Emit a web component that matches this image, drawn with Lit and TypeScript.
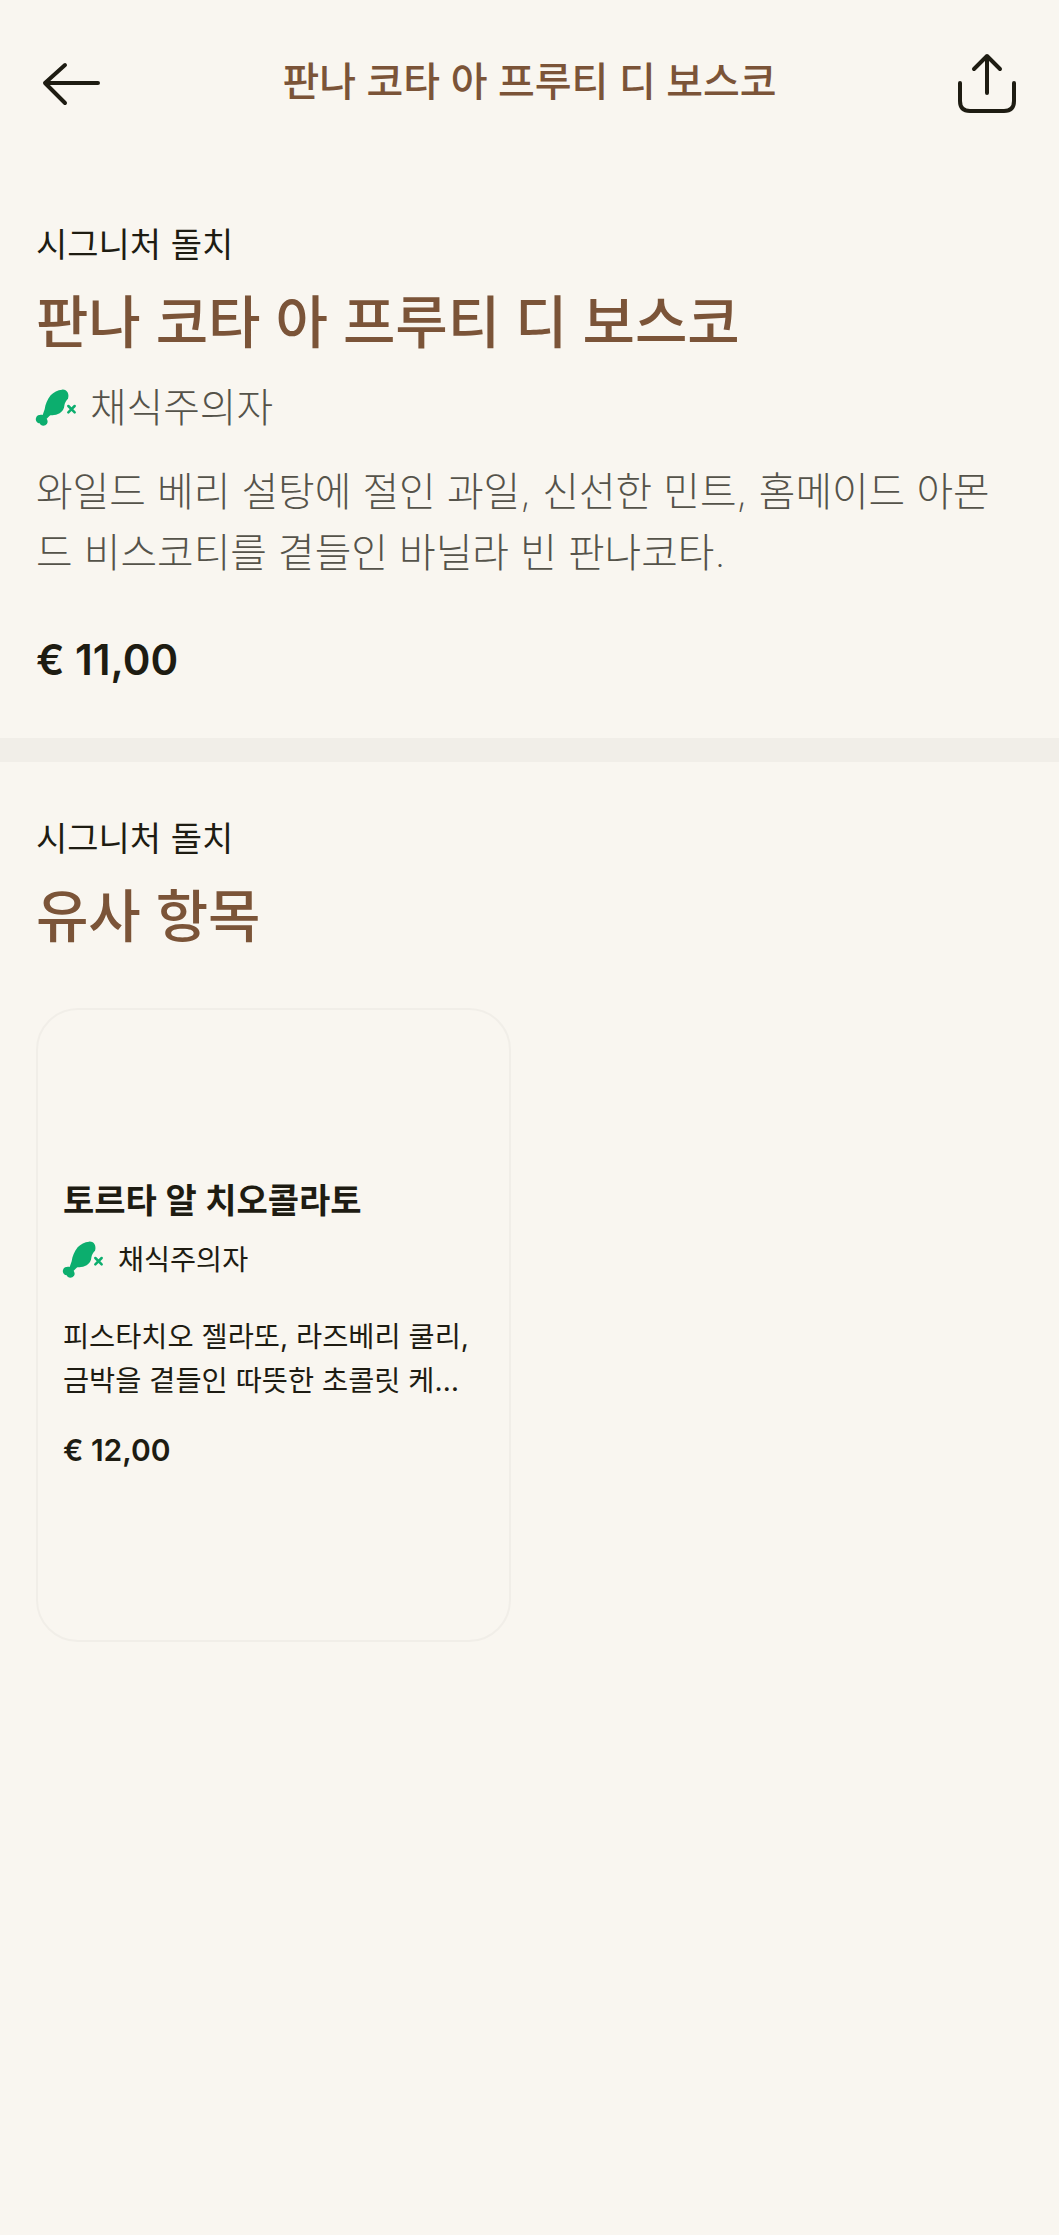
import { LitElement, html, css, svg } from "lit";
import { customElement } from "lit/decorators.js";

const drum = svg`<path fill="#0cae6e" d="M93 17 C107 15 116 29 111 44 C105 50 101 56 100 65 C99 80 86 91 69 93 C63 94 59 93 56 95 L47 104 C49 108 52 113 48 119 C43 127 29 127 26 118 C20 118 12 111 15 102 C18 92 29 92 35 93 L41 76 C43 61 49 46 59 34 C68 24 80 18 93 17 Z"/><path fill="none" stroke="#0cae6e" stroke-width="7.5" stroke-linecap="round" d="M112 66 L131 85 M131 66 L112 85"/>`;

@customElement("app-root")
export class AppRoot extends LitElement {
  static styles = css`
    :host { display: block; width: 1059px; min-height: 2235px; background: #f9f6f0; color: #1e1c12;
      font-family: "Inter", "Noto Sans CJK KR", sans-serif; }
    * { box-sizing: border-box; }
    .bar { display: flex; align-items: center; justify-content: space-between; height: 166px; padding: 0 0 0 40px; }
    .bar svg { display: block; fill: none; stroke: #1e1c12; stroke-width: 4; stroke-linecap: round; stroke-linejoin: round; }
    .back { width: 64px; height: 64px; }
    .share { width: 64px; height: 64px; margin-right: 40px; margin-top: -2px; }
    .bar-title { font-size: 40px; font-weight: 500; color: #7b5438; line-height: 48px; margin-top: -2px; letter-spacing: -0.05px; }
    .section { padding: 0 36px; }
    .top { padding-top: 54px; }
    .eyebrow { font-size: 34px; line-height: 50px; font-weight: 400; }
    .heading { font-size: 57px; font-weight: 500; color: #7b5438; line-height: 68px; margin-top: 19px; letter-spacing: -0.1px; }
    .veg { display: flex; align-items: center; }
    .veg svg { width: 42px; height: 38px; flex: none; overflow: visible; }
    .veg-lg { margin-top: 26px; gap: 12px; font-size: 39.8px; font-weight: 200; color: #55534a; line-height: 50px; }
    .desc { margin: 28px 0 0; font-size: 39.8px; font-weight: 200; line-height: 61px; color: #55534a; }
    .price { margin-top: 49px; font-size: 42px; font-weight: 600; line-height: 56px; }
    .rule { height: 24px; background: #f1eee8; margin-top: 50px; }
    .similar { padding-top: 52px; }
    .card { width: 475px; height: 634px; margin-top: 57px; border: 2px solid #f1eee8; border-radius: 42px; padding: 169px 25px 0; }
    .card-title { font-size: 34px; font-weight: 600; line-height: 44px; }
    .veg-sm { margin-top: 17px; gap: 13px; font-size: 28.3px; font-weight: 400; line-height: 40px; }
    .card-desc { margin: 35px 0 0; max-width: 414px; font-size: 28.4px; line-height: 44px; font-weight: 400;
      display: -webkit-box; -webkit-line-clamp: 2; -webkit-box-orient: vertical; overflow: hidden; }
    .card-price { margin-top: 27px; font-size: 30px; font-weight: 600; line-height: 40px; }
  `;

  render() {
    return html`
      <header class="bar">
        <svg class="back" viewBox="40 51 64 64"><path d="M45 83 H98 M65 65 L45 83 L65 103"/></svg>
        <div class="bar-title">판나 코타 아 프루티 디 보스코</div>
        <svg class="share" viewBox="955 50 64 64"><path d="M987 56 V93 M974 69 L987 56 L1000 69 M960 83 V101 Q960 111 970 111 H1004 Q1014 111 1014 101 V83"/></svg>
      </header>
      <section class="section top">
        <div class="eyebrow">시그니처 돌치</div>
        <div class="heading">판나 코타 아 프루티 디 보스코</div>
        <div class="veg veg-lg"><svg viewBox="15 15 126 114">${drum}</svg><span>채식주의자</span></div>
        <p class="desc">와일드 베리 설탕에 절인 과일, 신선한 민트, 홈메이드 아몬드 비스코티를 곁들인 바닐라 빈 판나코타.</p>
        <div class="price">€ 11,00</div>
      </section>
      <div class="rule"></div>
      <section class="section similar">
        <div class="eyebrow">시그니처 돌치</div>
        <div class="heading">유사 항목</div>
        <article class="card">
          <div class="card-title">토르타 알 치오콜라토</div>
          <div class="veg veg-sm"><svg viewBox="15 15 126 114">${drum}</svg><span>채식주의자</span></div>
          <p class="card-desc">피스타치오 젤라또, 라즈베리 쿨리, 금박을 곁들인 따뜻한 초콜릿 케이크와 바닐라 아이스크림.</p>
          <div class="card-price">€ 12,00</div>
        </article>
      </section>
    `;
  }
}
